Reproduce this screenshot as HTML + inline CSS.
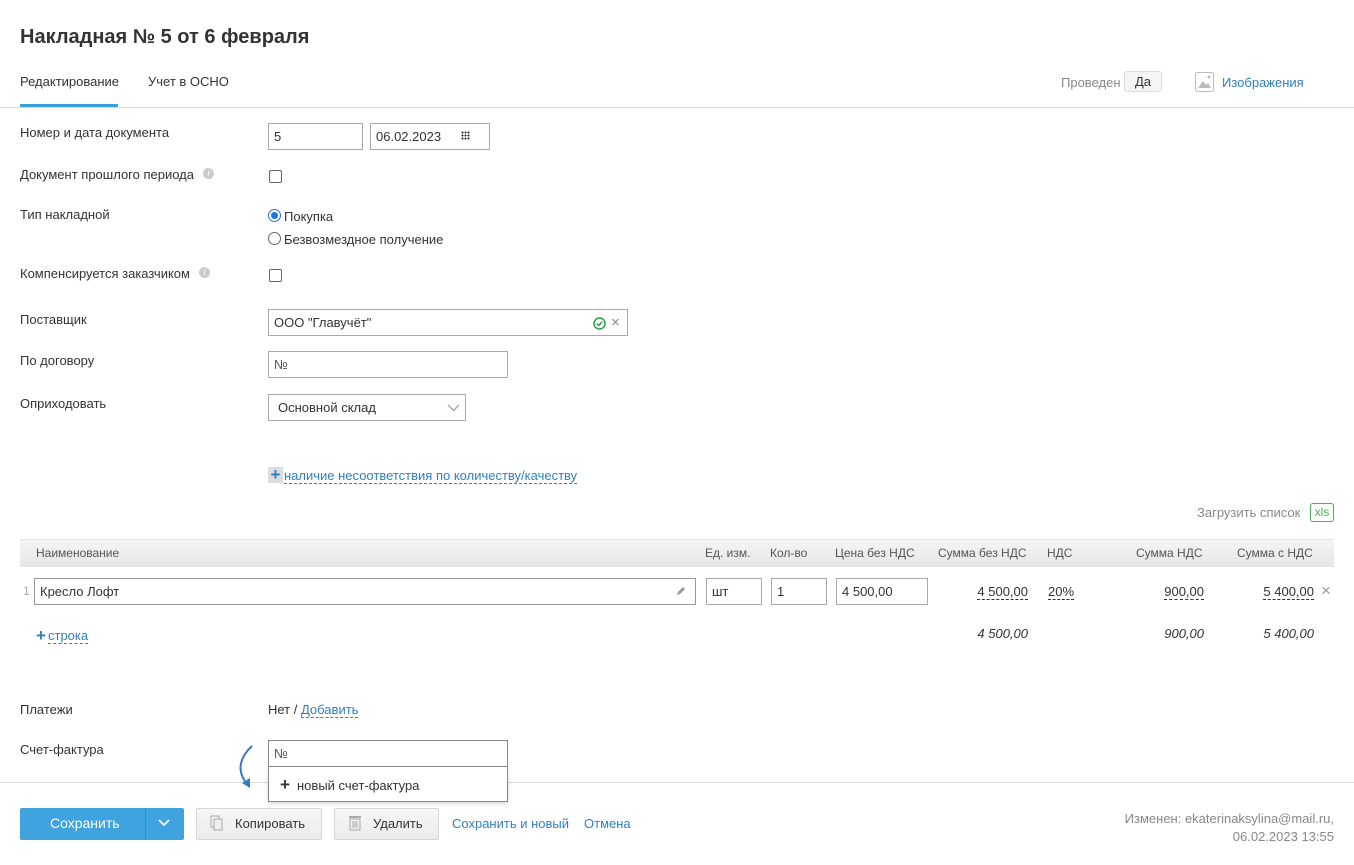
<!DOCTYPE html>
<html><head><meta charset="utf-8"><style>
*{box-sizing:border-box;margin:0;padding:0}
body{width:1354px;height:865px;background:#fff;font-family:"Liberation Sans",Arial,sans-serif;font-size:13px;color:#333;position:relative;overflow:hidden}
.a{position:absolute;white-space:nowrap}
.inp{position:absolute;border:1px solid #a9a9a9;background:#fff;height:27px;padding:0 5px;line-height:25px;font-size:13px;color:#333}
.lbl{position:absolute;left:20px;color:#333}
.link{color:#2f7fc1}
.dash{border-bottom:1px dashed #2f7fc1}
.th{position:absolute;top:546px;color:#555;font-size:12px}
.num{position:absolute;top:584px;color:#333;border-bottom:1px dashed #333;line-height:15px}
.tot{position:absolute;top:626px;font-style:italic;color:#333}
.btn{position:absolute;top:808px;height:32px;border:1px solid #d6d6d6;background:linear-gradient(#f7f7f7,#ebebeb);border-radius:2px;line-height:30px;font-size:13px;color:#333}
</style></head><body>
<div class="a" style="left:20px;top:26px;font-size:20px;font-weight:bold;color:#333">Накладная № 5 от 6 февраля</div>
<div class="a" style="left:20px;top:74px">Редактирование</div>
<div class="a" style="left:148px;top:74px">Учет в ОСНО</div>
<div class="a" style="left:20px;top:104px;width:98px;height:3px;background:#3aa0dd"></div>
<div class="a" style="left:0;top:107px;width:1354px;height:1px;background:#ddd"></div>
<div class="a" style="left:1061px;top:75px;color:#888">Проведен</div>
<div class="a" style="left:1124px;top:71px;width:38px;height:21px;border:1px solid #ddd;border-radius:3px;background:#f5f5f5;text-align:center;line-height:19px;color:#333">Да</div>
<svg class="a" style="left:1195px;top:72px" width="19" height="20" viewBox="0 0 19 20"><rect x="0.5" y="0.5" width="18" height="19" rx="2" fill="#fff" stroke="#bbb"/><path d="M3 16 L8 9 L11 13 L13 11 L16 16Z" fill="#bbb"/><circle cx="14" cy="5" r="1.5" fill="#bbb"/></svg>
<div class="a link" style="left:1222px;top:75px">Изображения</div>

<div class="lbl" style="top:125px">Номер и дата документа</div>
<div class="inp" style="left:268px;top:123px;width:95px">5</div>
<div class="inp" style="left:370px;top:123px;width:120px">06.02.2023</div>
<div class="a" style="left:461px;top:131px;width:9px;height:9px;background:radial-gradient(circle,#222 0.9px,transparent 1.1px) 0 0/3px 3px"></div>

<div class="lbl" style="top:167px">Документ прошлого периода</div>
<div class="a" style="left:203px;top:168px;width:11px;height:11px;border-radius:50%;background:#ccc;color:#fff;font-size:9px;text-align:center;line-height:11px;font-style:italic">i</div>
<div class="a" style="left:269px;top:170px;width:13px;height:13px;border:1px solid #666;border-radius:2px"></div>

<div class="lbl" style="top:207px">Тип накладной</div>
<div class="a" style="left:268px;top:209px;width:13px;height:13px;border:1px solid #1a73e8;border-radius:50%"><div style="margin:2px;width:7px;height:7px;border-radius:50%;background:#1a73e8"></div></div>
<div class="a" style="left:284px;top:209px">Покупка</div>
<div class="a" style="left:268px;top:232px;width:13px;height:13px;border:1px solid #666;border-radius:50%"></div>
<div class="a" style="left:284px;top:232px">Безвозмездное получение</div>

<div class="lbl" style="top:266px">Компенсируется заказчиком</div>
<div class="a" style="left:199px;top:267px;width:11px;height:11px;border-radius:50%;background:#ccc;color:#fff;font-size:9px;text-align:center;line-height:11px;font-style:italic">i</div>
<div class="a" style="left:269px;top:269px;width:13px;height:13px;border:1px solid #666;border-radius:2px"></div>

<div class="lbl" style="top:312px">Поставщик</div>
<div class="inp" style="left:268px;top:309px;width:360px">ООО "Главучёт"</div>
<svg class="a" style="left:593px;top:317px" width="13" height="13" viewBox="0 0 13 13"><circle cx="6.5" cy="6.5" r="5.5" fill="none" stroke="#2e9e4a" stroke-width="1.5"/><path d="M3.8 6.6 L5.8 8.5 L9.2 4.6" fill="none" stroke="#2e9e4a" stroke-width="1.5"/></svg>
<div class="a" style="left:611px;top:314px;color:#888;font-size:15px">×</div>

<div class="lbl" style="top:353px">По договору</div>
<div class="inp" style="left:268px;top:351px;width:240px;color:#555">№</div>

<div class="lbl" style="top:396px">Оприходовать</div>
<div class="inp" style="left:268px;top:394px;width:198px;padding-left:9px">Основной склад</div>
<svg class="a" style="left:447px;top:404px" width="13" height="8"><path d="M1 1 L6.5 6.5 L12 1" fill="none" stroke="#aaa" stroke-width="1.5"/></svg>

<div class="a" style="left:268px;top:467px;width:15px;height:16px;background:#ddd;color:#2f7fc1;font-size:17px;line-height:16px;text-align:center;font-weight:bold">+</div>
<div class="a link dash" style="left:284px;top:468px;line-height:15px">наличие несоответствия по количеству/качеству</div>

<div class="a" style="left:1197px;top:505px;color:#888">Загрузить список</div>
<div class="a" style="left:1310px;top:503px;width:24px;height:19px;border:1px solid #4caf50;border-radius:3px;color:#4caf50;font-size:12px;text-align:center;line-height:17px">xls</div>

<div class="a" style="left:20px;top:539px;width:1314px;height:28px;background:linear-gradient(#f5f5f5,#e6e6e6);border-top:1px solid #e2e2e2"></div>
<div class="th" style="left:36px">Наименование</div>
<div class="th" style="left:705px">Ед. изм.</div>
<div class="th" style="left:770px">Кол-во</div>
<div class="th" style="left:835px">Цена без НДС</div>
<div class="th" style="left:938px">Сумма без НДС</div>
<div class="th" style="left:1047px">НДС</div>
<div class="th" style="left:1136px">Сумма НДС</div>
<div class="th" style="left:1237px">Сумма с НДС</div>

<div class="a" style="left:23px;top:584px;color:#aaa;font-size:12px">1</div>
<div class="inp" style="left:34px;top:578px;width:662px;border-color:#999">Кресло Лофт</div>
<svg class="a" style="left:676px;top:586px" width="10" height="10"><path d="M1 9 L2 6 L7 1 L9 3 L4 8Z" fill="#999"/></svg>
<div class="inp" style="left:706px;top:578px;width:56px">шт</div>
<div class="inp" style="left:771px;top:578px;width:56px">1</div>
<div class="inp" style="left:836px;top:578px;width:92px">4 500,00</div>
<div class="num" style="right:326px">4 500,00</div>
<div class="num" style="left:1048px">20%</div>
<div class="num" style="right:150px">900,00</div>
<div class="num" style="right:40px">5 400,00</div>
<div class="a" style="left:1321px;top:581px;color:#999;font-size:17px">×</div>

<div class="a" style="left:36px;top:626px;color:#2f7fc1;font-size:17px;font-weight:bold">+</div>
<div class="a link dash" style="left:48px;top:628px;line-height:15px">строка</div>
<div class="tot" style="right:326px">4 500,00</div>
<div class="tot" style="right:150px">900,00</div>
<div class="tot" style="right:40px">5 400,00</div>

<div class="lbl" style="top:702px">Платежи</div>
<div class="a" style="left:268px;top:702px">Нет / <span class="link dash">Добавить</span></div>

<div class="lbl" style="top:742px">Счет-фактура</div>
<div class="a" style="left:0;top:782px;width:1354px;height:1px;background:#ddd"></div>
<div class="inp" style="left:268px;top:740px;width:240px;border-color:#888;color:#555">№</div>
<div class="a" style="left:268px;top:767px;width:240px;height:35px;border:1px solid #888;border-top:none;background:#fff;box-shadow:0 2px 4px rgba(0,0,0,.15)"></div>
<div class="a" style="left:280px;top:775px;font-size:17px;font-weight:bold">+</div>
<div class="a" style="left:297px;top:778px">новый счет-фактура</div>
<svg class="a" style="left:232px;top:743px" width="36" height="48"><path d="M20 3 C6 16 5 30 16 42" fill="none" stroke="#3a78c0" stroke-width="2"/><path d="M10 40 L18 45 L18 35Z" fill="#3a78c0"/></svg>

<div class="a" style="left:20px;top:808px;width:164px;height:32px;background:#3ea3df;border-radius:2px"></div>
<div class="a" style="left:145px;top:808px;width:1px;height:32px;background:#3490c8"></div>
<div class="a" style="left:50px;top:815px;color:#fff;font-size:14px">Сохранить</div>
<svg class="a" style="left:158px;top:819px" width="12" height="8"><path d="M1 1 L6 6 L11 1" fill="none" stroke="#fff" stroke-width="1.8"/></svg>
<div class="btn" style="left:196px;width:126px;padding-left:38px">Копировать</div>
<svg class="a" style="left:210px;top:815px" width="14" height="16"><rect x="1" y="1" width="8" height="11" fill="none" stroke="#aaa"/><rect x="4" y="4" width="8" height="11" fill="#eee" stroke="#aaa"/></svg>
<div class="btn" style="left:334px;width:105px;padding-left:38px">Удалить</div>
<svg class="a" style="left:348px;top:814px" width="14" height="17"><rect x="1" y="2" width="12" height="2" fill="#aaa"/><rect x="2" y="5" width="10" height="11" fill="none" stroke="#aaa"/><path d="M5 7V14M7 7V14M9 7V14" stroke="#aaa"/></svg>
<div class="a link" style="left:452px;top:816px">Сохранить и новый</div>
<div class="a link" style="left:584px;top:816px">Отмена</div>
<div class="a" style="right:20px;top:810px;color:#888;text-align:right;line-height:18px">Изменен: ekaterinaksylina@mail.ru,<br>06.02.2023 13:55</div>
</body></html>
